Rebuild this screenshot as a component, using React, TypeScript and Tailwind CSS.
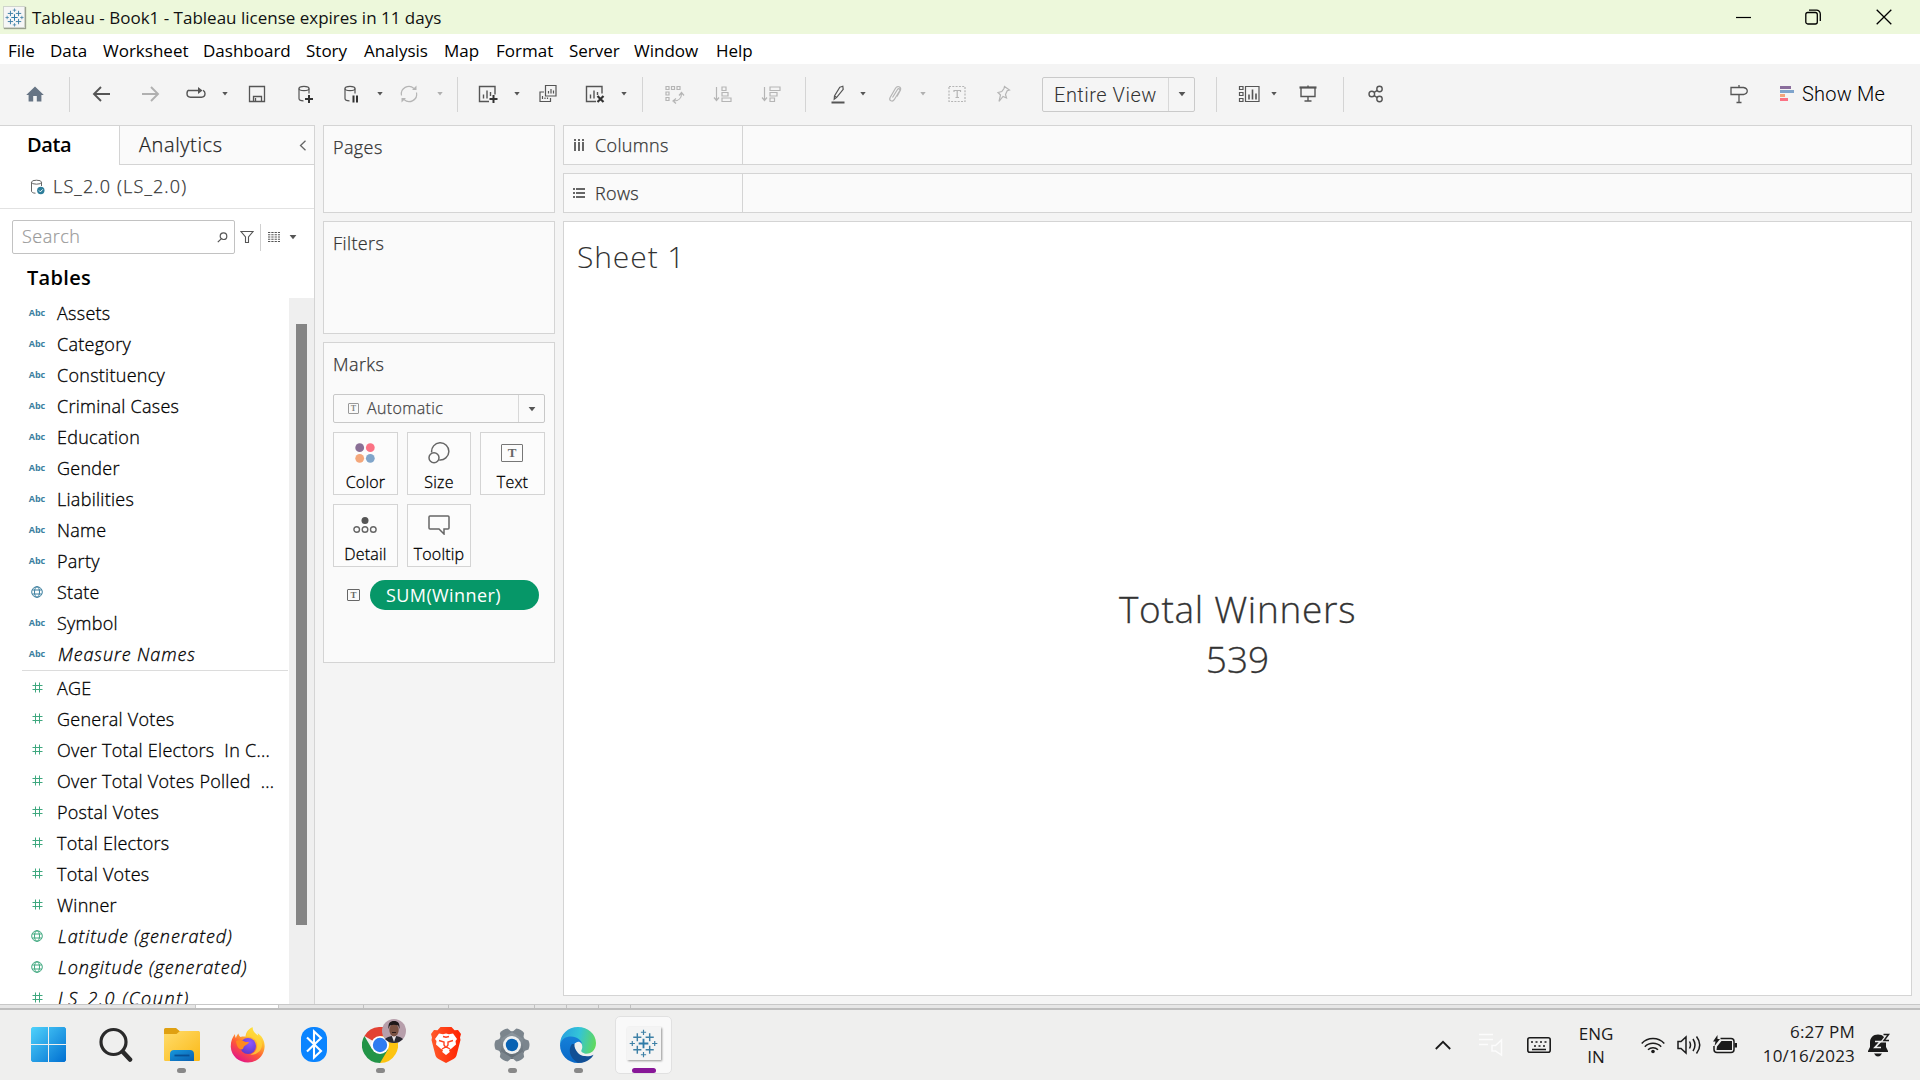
import type { ReactNode } from 'react';

type Cls = { className?: string };

const Svg = ({ className = '', children, size = 24 }: Cls & { children: ReactNode; size?: number }) => (
  <svg className={`shrink-0 ${className}`} width={size} height={size} viewBox="0 0 24 24" fill="none" stroke="currentColor" strokeWidth="1.2">
    {children}
  </svg>
);

const Caret = ({ className = '', big = false }: Cls & { big?: boolean }) => (
  <svg className={`shrink-0 ${className}`} width="8" height="6" viewBox="0 0 8 6">
    <path d={big ? 'M.6 1h6.800L4 5.200z' : 'M1.300 1h5.400L4 4.600z'} fill="currentColor" />
  </svg>
);

const Sep = ({ className = '' }: Cls) => <div className={`h-[35px] w-px shrink-0 bg-[#d4d4d4] ${className}`} />;

const Plus = ({ x, y, r, w }: { x: number; y: number; r: number; w: number }) => (
  <path d={`M${x - r} ${y}h${2 * r}M${x} ${y - r}v${2 * r}`} strokeWidth={w} />
);

/* Cluster of crosses that forms the Tableau mark */
const TableauMark = ({ size, thin = false }: { size: number; thin?: boolean }) => (
  <svg width={size} height={size} viewBox="0 0 30 30" fill="none" stroke="#2f7ba8">
    <Plus x={15} y={15} r={5} w={thin ? 1.6 : 1.9} />
    <g stroke="#3d80a6">
      <Plus x={8.6} y={8.6} r={4.2} w={1.5} />
      <Plus x={21.4} y={8.6} r={4.2} w={1.5} />
      <Plus x={8.6} y={21.4} r={4.2} w={1.5} />
      <Plus x={21.4} y={21.4} r={4.2} w={1.5} />
      <Plus x={15} y={3.4} r={2.7} w={1.2} />
      <Plus x={15} y={26.6} r={2.7} w={1.2} />
      <Plus x={3.4} y={15} r={2.7} w={1.2} />
      <Plus x={26.6} y={15} r={2.7} w={1.2} />
    </g>
  </svg>
);

const TextBox = ({ className = '' }: Cls) => (
  <span className={`flex shrink-0 items-center justify-center rounded-[1px] font-['Liberation_Serif',serif] leading-none font-bold ${className}`}>
    T
  </span>
);

const Cylinder = () => (
  <>
    <ellipse cx="11" cy="6.5" rx="5" ry="2.2" />
    <path d="M6 6.5v10c0 1.3 2 2.3 4.5 2.3M16 6.5v5" />
  </>
);

const menus: [string, string][] = [
  ['File', 'w-[42px]'], ['Data', 'w-[53px]'], ['Worksheet', 'w-[100px]'], ['Dashboard', 'w-[103px]'], ['Story', 'w-[58px]'],
  ['Analysis', 'w-[80px]'], ['Map', 'w-[52px]'], ['Format', 'w-[73px]'], ['Server', 'w-[65px]'], ['Window', 'w-[82px]'], ['Help', 'w-[60px]'],
];

function TitleBar() {
  return (
    <header className="flex h-[34px] items-center bg-[#edf8db] pl-[3px]">
      <div className="flex h-[22px] w-[22px] items-center justify-center border border-[#cfd4cc] bg-[#f6f6f6] shadow-[1px_1px_1px_rgba(0,0,0,.35)]">
        <TableauMark size={19} thin />
      </div>
      <span className="ml-[7px] grow pt-px text-[17px] text-[#111]">Tableau - Book1 - Tableau license expires in 11 days</span>
      <div className="flex items-center text-black">
        <svg width="15" height="16"><path d="M0 8.500h15" stroke="currentColor" strokeWidth="1.2" /></svg>
        <svg className="ml-[54px]" width="16" height="16" viewBox="0 0 16 16" fill="none" stroke="currentColor" strokeWidth="1.3">
          <rect x=".8" y="3.5" width="11.5" height="11.5" rx="2" />
          <path d="M4 1.2h7.5a3.8 3.8 0 0 1 3.8 3.8V12" />
        </svg>
        <svg className="mr-[28px] ml-[55px]" width="16" height="16" viewBox="0 0 16 16" fill="none" stroke="currentColor" strokeWidth="1.3">
          <path d="M.7.7l14.6 14.6M15.3.7L.7 15.3" />
        </svg>
      </div>
    </header>
  );
}

function Toolbar() {
  return (
    <div className="flex h-[61px] items-center bg-[#f4f4f4] pb-px text-[#555]">
      <svg className="ml-[23px] shrink-0" width="24" height="24" viewBox="0 0 24 24"><path d="M12 4.500L3.200 13h2.400v6.500h4.600V14h3.600v5.500h4.600V13h2.400z" fill="#667484" /></svg>
      <Sep className="ml-[22px]" />
      <Svg className="ml-5"><path d="M20 12H4.500M11 5l-7 7 7 7" strokeWidth="1.900" /></Svg>
      <Svg className="ml-6 text-[#b0b0b0]"><path d="M4 12h15.500M13 5l7 7-7 7" strokeWidth="1.900" /></Svg>
      <Svg className="ml-[22px]"><path d="M5 8.200C3.300 8.700 3 10 3 11.500 3 14 4.500 15.200 6.500 15.200h11c2 0 3.500-1.200 3.500-3.700 0-1.500-.5-2.600-2-3.200M5 8.500h10.500" strokeWidth="1.400" /><path d="M14 5l4.500 3.500L14 12z" fill="currentColor" stroke="none" /></Svg>
      <Caret className="ml-[13px]" />
      <Svg className="ml-4"><path d="M4.500 4.500h15v15h-15zM8.500 19.500v-5h8v5M10.500 19v-3" strokeWidth="1.300" /></Svg>
      <Svg className="ml-6"><Cylinder /><path d="M16 13v8M12 17h8" stroke="#333" strokeWidth="2" /></Svg>
      <Svg className="ml-[22px]"><Cylinder /><path d="M14.500 13.500v7M18 13.500v7" stroke="#333" strokeWidth="2" /></Svg>
      <Caret className="ml-[13px]" />
      <Svg className="ml-[13px] text-[#b5b5b5]"><path d="M4.500 13.500a7.500 7.500 0 0 1 12.500-7M19.500 10.500a7.500 7.500 0 0 1-12.500 7" /><path d="M15 8h4.500V3.500zM9 16H4.500v4.500z" fill="currentColor" stroke="none" /></Svg>
      <Caret className="ml-[15px] text-[#b0b0b0]" />
      <Sep className="ml-[13px]" />
      <Svg className="ml-[18px]"><path d="M13 19.500H3.500v-15h15.500v8M7.500 16.500v-4M11 16.500v-8M14.500 14v-4" strokeWidth="1.400" /><path d="M17.500 13v8M13.500 17h8" stroke="#333" strokeWidth="2" /></Svg>
      <Caret className="ml-[13px]" />
      <Svg className="ml-[15px]"><path d="M9.500 3.500h10.500v10.500H9.500zM8 10H4v9.500h10.500V16M12.500 11.500V9M15 11.500V7M17.500 11.500v-3M6.500 17v-3M9 17v-1.500M11.500 17v-1.500" /></Svg>
      <Svg className="ml-[23px]"><path d="M13 19.500H3.500v-15h15.500v7M7.500 16.500v-4M11 16.500v-8M14.500 13v-3" strokeWidth="1.400" /><path d="M14.500 14l6 6M20.500 14l-6 6" stroke="#333" strokeWidth="2.200" /></Svg>
      <Caret className="ml-[13px]" />
      <Sep className="ml-[14px]" />
      <Svg className="ml-[19px] text-[#b5b5b5]"><path d="M4 4.500h3v3H4zM9.500 4.500h3v3h-3zM15 4.500h3v3h-3zM4 10h3v3H4zM4 15.500h3v3H4zM19.500 11.500c0 4.500-3 7.500-7.500 7.500M17 13.500l2.500-3 2.500 3M14 16.500L11 19l3 2.500" /></Svg>
      <Svg className="ml-[25px] text-[#b5b5b5]"><path d="M5.500 5v13M3 15.500l2.500 3 2.500-3M11 5h4v3.500h-4zM11 10.500h6v3.500h-6zM11 16h9v3.500h-9z" /></Svg>
      <Svg className="ml-[25px] text-[#b5b5b5]"><path d="M4.500 5v13M2 15.500l2.500 3 2.500-3M10 5h10v3.500H10zM10 10.500h7v3.500h-7zM10 16h4.500v3.500H10z" /></Svg>
      <Sep className="ml-[21px]" />
      <Svg className="ml-5"><path d="M13.800 5.200l3-1 .4 3.200-6.500 8-2.500 1.800.3-3.200zM8.500 14l2.200 1.500" /><path d="M5.500 20.500h13" strokeWidth="2" /></Svg>
      <Caret className="ml-[9px]" />
      <Svg className="ml-4 text-[#b5b5b5]"><path d="M9.500 15.500l5-8c1-1.600 3-.5 2.200 1.200l-5.500 9c-1.700 2.600-5.500 1-4.200-2l5.500-9.500c1.700-2.800 6-1.800 5 1.800l-3.500 6.500" /></Svg>
      <Caret className="ml-3 text-[#b0b0b0]" />
      <Svg className="ml-[18px] text-[#b5b5b5]"><rect x="4" y="4.500" width="16" height="15" strokeDasharray="2 1.300" /><path d="M9 10V8.500h6.500V10M12.200 8.500v7M10.500 15.500H14" /></Svg>
      <Svg className="ml-[22px] text-[#b5b5b5]"><path d="M13.500 4.500l5 3.500-2.300.8-1.700 3.700 1 3.500-3.500-1.500-4 5 1.500-6.500-2.500-2.500 3.800-1 2.200-3z" /></Svg>
      <div className="ml-[27px] flex h-[35px] w-[153px] shrink-0 items-center rounded-[2px] border border-[#cacaca] bg-[#f5f5f5]">
        <span className="w-[125px] pt-px pl-[11px] font-[Roboto] text-[20px] font-light tracking-[.5px] text-[#333]">Entire View</span>
        <span className="flex h-full grow items-center justify-center border-l border-[#d8d8d8]"><Caret big /></span>
      </div>
      <Sep className="ml-[21px]" />
      <Svg className="ml-5"><path d="M8.500 4.500H22v15H8.500zM2.500 4.500h3.500v3H2.500zM2.500 10.500h3.500v3H2.500zM2.500 16.500h3.500v3H2.500z" /><path d="M12 17.500v-5M15.500 17.500V7.500M19 17.500v-6" strokeWidth="1.600" /></Svg>
      <Caret className="ml-[9px]" />
      <Svg className="ml-[18px]"><path d="M3.500 5.500h17" strokeWidth="2.200" /><path d="M5 6v8.500h14V6M12 3.500V5M12 14.500V19M8.500 19h7" strokeWidth="1.400" /></Svg>
      <Sep className="ml-[23px]" />
      <Svg className="ml-[21px]"><circle cx="6.800" cy="12" r="2.800" strokeWidth="1.400" /><circle cx="14.500" cy="7" r="2.700" strokeWidth="1.400" /><circle cx="14.500" cy="17" r="2.700" strokeWidth="1.400" /><path d="M9.200 10.300l3.100-2M9.200 13.700l3.100 2" strokeWidth="1.400" /></Svg>
      <Svg className="ml-[338px]"><path d="M4 5.500h12.500c5 1 5 6 0 7H4zM12 3v2.500M12 12.500v8M9.500 20.500h5" strokeWidth="1.300" /></Svg>
      <svg className="ml-[29px] shrink-0" width="15" height="16"><path d="M0 1.500h11" stroke="#8a6d9c" strokeWidth="3" /><path d="M0 5.500h14" stroke="#7fa4cc" strokeWidth="3" /><path d="M0 9.500h5" stroke="#f2a57c" strokeWidth="3" /><path d="M0 13.500h8" stroke="#fb7284" strokeWidth="3" /></svg>
      <span className="ml-[7px] font-[Roboto] text-[20px] font-light tracking-[.2px] whitespace-nowrap text-black">Show Me</span>
    </div>
  );
}

const Globe = () => (
  <svg width="12" height="12" viewBox="0 0 12 12" fill="none" stroke="currentColor" strokeWidth="1">
    <circle cx="6" cy="6" r="5.300" /><ellipse cx="6" cy="6" rx="2.500" ry="5.300" /><path d="M1.300 4h9.400M1.300 8h9.400" />
  </svg>
);
const Hash = () => (
  <svg width="11" height="11" viewBox="0 0 11 11" fill="none" stroke="currentColor"><path d="M3.500.5v10M7.500.5v10M.5 3.500h10M.5 7.500h10" /></svg>
);

type Field = { n: string; k: 'abc' | 'geo' | 'num'; i?: boolean };
const dimensions: Field[] = [
  ...['Assets', 'Category', 'Constituency', 'Criminal Cases', 'Education', 'Gender', 'Liabilities', 'Name', 'Party'].map((n) => ({ n, k: 'abc' as const })),
  { n: 'State', k: 'geo' }, { n: 'Symbol', k: 'abc' }, { n: 'Measure Names', k: 'abc', i: true },
];
const measures: Field[] = [
  ...['AGE', 'General Votes', 'Over Total Electors  In C...', 'Over Total Votes Polled  ...', 'Postal Votes', 'Total Electors', 'Total Votes', 'Winner'].map((n) => ({ n, k: 'num' as const })),
  { n: 'Latitude (generated)', k: 'geo', i: true }, { n: 'Longitude (generated)', k: 'geo', i: true }, { n: 'LS_2.0 (Count)', k: 'num', i: true },
];

const FieldRow = ({ f, green }: { f: Field; green?: boolean }) => (
  <div className="flex h-[31px] shrink-0 items-center pl-[28px]">
    <span className={`flex w-[18px] justify-center ${green ? 'text-[#3fa87f]' : 'text-[#3c7f9f]'}`}>
      {f.k === 'abc' ? <span className="text-[9px] leading-none font-bold">Abc</span> : f.k === 'geo' ? <Globe /> : <Hash />}
    </span>
    <span className={`text-[18px] leading-[26px] font-light whitespace-pre text-black [-webkit-text-stroke:0.3px_black] ${f.i ? (f.n.startsWith('LS') ? 'ml-3 tracking-[1.600px] italic' : 'ml-3 tracking-[.9px] italic') : 'ml-[11px] tracking-[.27px]'}`}>{f.n}</span>
  </div>
);

function DataPane() {
  return (
    <aside className="flex w-[315px] shrink-0 flex-col overflow-hidden border-r border-[#d4d4d4] bg-white">
      <div className="flex h-10 shrink-0 text-[20px]">
        <div className="w-[119px] border-t border-[#d4d4d4] pt-[4px] pl-[27px] font-semibold tracking-[-.4px] text-black">Data</div>
        <div className="flex grow items-center border border-r-0 border-[#d4d4d4] bg-[#fafafa] pr-[7px] pl-[19px] font-light">
          <span className="grow tracking-[.6px] text-[#222] [-webkit-text-stroke:0.25px_#222]">Analytics</span>
          <svg width="8" height="11" viewBox="0 0 8 11" fill="none" stroke="#666" strokeWidth="1.300"><path d="M6.500.7L1.500 5.500l5 4.800" /></svg>
        </div>
      </div>
      <div className="flex h-11 shrink-0 items-center border-b border-[#e2e2e2] pl-[30px]">
        <svg width="16" height="16" viewBox="0 0 16 16" fill="none" stroke="#666"><ellipse cx="6.500" cy="3.200" rx="5" ry="2" /><path d="M1.500 3.200v9c0 1 1.500 2 4 2M11.500 3.200V7" /><circle cx="10.800" cy="11.500" r="3.700" fill="#2d7d9a" stroke="none" /><path d="M9 11.500l1.400 1.400 2.300-2.500" stroke="#fff" /></svg>
        <span className="ml-[7px] text-[18px] font-light tracking-[1.150px] text-[#333] [-webkit-text-stroke:0.25px_#333]">LS_2.0 (LS_2.0)</span>
      </div>
      <div className="mt-[11px] flex h-[34px] shrink-0 items-center pl-3 text-[#555]">
        <div className="flex h-[34px] w-[223px] items-center rounded-[2px] border border-[#c2c2c2] pr-[6px] pl-[9px]">
          <span className="grow pb-px text-[18px] font-light tracking-[.5px] text-[#999] [-webkit-text-stroke:0.2px_#999]">Search</span>
          <svg width="11" height="11" viewBox="0 0 11 11" fill="none" stroke="currentColor" strokeWidth="1.200"><circle cx="6.500" cy="4.200" r="3.300" /><path d="M4.200 6.800L.8 10.200" /></svg>
        </div>
        <svg className="ml-[5px]" width="14" height="14" viewBox="0 0 14 14" fill="none" stroke="currentColor" strokeWidth="1.100"><path d="M1 1.500h12L8.500 7v5.500h-3V7z" /></svg>
        <div className="ml-[6px] h-[27px] w-px bg-[#d0d0d0]" />
        <svg className="ml-[7px]" width="12" height="10" viewBox="0 0 12 10" stroke="currentColor" strokeWidth="1.200" strokeDasharray="2.300 1"><path d="M0 .5h12M0 2.750h12M0 5h12M0 7.250h12M0 9.500h12" /></svg>
        <Caret big className="ml-[9px]" />
      </div>
      <div className="mt-[10px] h-[34px] shrink-0 pl-[27px] text-[20px] leading-[27px] font-semibold tracking-[.3px] text-black">Tables</div>
      <div className="flex min-h-0 grow">
        <div className="-mt-px flex w-[289px] flex-col overflow-hidden">
          {dimensions.map((f) => <FieldRow key={f.n} f={f} />)}
          <div className="my-px mr-px ml-[22px] h-px shrink-0 bg-[#dcdcdc]" />
          {measures.map((f) => <FieldRow key={f.n} f={f} green />)}
        </div>
        <div className="w-[25px] bg-[#efefef] pt-[26px] pl-[7px]"><div className="h-[601px] w-[11px] bg-[#858585]" /></div>
      </div>
    </aside>
  );
}

const Card = ({ title, className, children }: { title: string; className: string; children?: ReactNode }) => (
  <section className={`shrink-0 border border-[#d4d4d4] bg-[#fafafa] pl-[9px] ${className}`}>
    <h2 className="mb-px pt-[7px] text-[18px] leading-[28px] font-light tracking-[.4px] text-[#333] [-webkit-text-stroke:0.25px_#333]">{title}</h2>
    {children}
  </section>
);

const MarkButton = ({ label, children }: { label: string; children: ReactNode }) => (
  <div className="flex h-[63px] flex-col items-center border border-[#d4d4d4] bg-[#fcfcfc]">
    <div className="flex h-[39px] shrink-0 items-center text-[#666]">{children}</div>
    <span className="text-[16px] leading-[20px] font-light tracking-[.2px] text-black [-webkit-text-stroke:0.3px_black]">{label}</span>
  </div>
);

function Shelves() {
  return (
    <div className="ml-2 flex w-[232px] shrink-0 flex-col gap-2">
      <Card title="Pages" className="h-[88px]" />
      <Card title="Filters" className="h-[113px]" />
      <Card title="Marks" className="h-[321px]">
        <div className="mt-[16px] flex h-[29px] w-[212px] items-center rounded-[2px] border border-[#c8c8c8] text-[#555]">
          <TextBox className="ml-[14px] h-[11px] w-[11px] border border-[#999] text-[8px] text-[#888]" />
          <span className="ml-[8px] w-[151px] pb-px text-[16px] font-light tracking-[.35px] text-[#444] [-webkit-text-stroke:0.25px_#444]">Automatic</span>
          <span className="flex h-full grow items-center justify-center border-l border-[#d8d8d8]"><Caret big /></span>
        </div>
        <div className="mt-[9px] grid w-[212px] grid-cols-[65px_64px_65px] gap-[9px]">
          <MarkButton label="Color">
            <svg className="mr-[2px]" width="20" height="20"><circle cx="4.700" cy="4.700" r="4.400" fill="#8a7096" /><circle cx="15.300" cy="4.700" r="4.400" fill="#fb7284" /><circle cx="4.700" cy="15.300" r="4.400" fill="#f4a77b" /><circle cx="15.300" cy="15.300" r="4.400" fill="#80a5ca" /></svg>
          </MarkButton>
          <MarkButton label="Size">
            <svg width="22" height="22" fill="none" stroke="currentColor" strokeWidth="1.500"><path d="M3.700 10.500a8.600 8.600 0 1 1 7.500 7.400" /><circle cx="6" cy="15.800" r="5" /></svg>
          </MarkButton>
          <MarkButton label="Text"><TextBox className="mr-px h-[18px] w-[22px] border-[1.500px] border-[#777] text-[13px]" /></MarkButton>
          <MarkButton label="Detail">
            <svg className="mr-[2px]" width="24" height="18" fill="none" stroke="currentColor" strokeWidth="1.400"><circle cx="12" cy="4.500" r="3.500" fill="#555" stroke="none" /><circle cx="3.700" cy="13.500" r="2.800" /><circle cx="12" cy="13.500" r="2.800" /><circle cx="20.300" cy="13.500" r="2.800" /></svg>
          </MarkButton>
          <MarkButton label="Tooltip">
            <svg width="22" height="20" fill="none" stroke="currentColor" strokeWidth="1.500"><path d="M2 1h18a1 1 0 0 1 1 1v11a1 1 0 0 1-1 1h-4v5l-5-5H2a1 1 0 0 1-1-1V2a1 1 0 0 1 1-1z" /></svg>
          </MarkButton>
        </div>
        <div className="mt-[13px] flex h-[30px] items-center pl-[14px] text-[#666]">
          <TextBox className="h-[12px] w-[13px] border border-[#666] text-[9px]" />
          <span className="ml-[10px] flex h-[30px] w-[169px] items-center rounded-full bg-[#069768] pl-[16px] text-[18px] tracking-[.4px] text-white">SUM(Winner)</span>
        </div>
      </Card>
    </div>
  );
}

const Shelf = ({ label, children }: { label: string; children: ReactNode }) => (
  <div className="flex h-10 shrink-0 border border-[#d4d4d4] bg-[#fafafa]">
    <div className="flex w-[179px] items-center border-r border-[#d4d4d4] pl-[9px]">
      {children}
      <span className="ml-[10px] text-[18px] font-light tracking-[.35px] text-[#333] [-webkit-text-stroke:0.25px_#333]">{label}</span>
    </div>
  </div>
);

function Sheet() {
  return (
    <main className="mr-2 ml-2 flex grow flex-col gap-2">
      <Shelf label="Columns"><svg width="12" height="12" fill="#666"><path d="M1 0h2v2H1zM5 0h2v2H5zM9 0h2v2H9zM1 3h2v9H1zM5 3h2v9H5zM9 3h2v9H9z" /></svg></Shelf>
      <Shelf label="Rows"><svg width="12" height="12" fill="#666"><path d="M0 1h2v2H0zM0 5h2v2H0zM0 9h2v2H0zM3 1h9v2H3zM3 5h9v2H3zM3 9h9v2H3z" /></svg></Shelf>
      <section className="flex h-[775px] flex-col border border-[#d4d4d4] bg-white font-light text-[#333]">
        <h1 className="pt-[14px] pl-[13px] text-[30px] leading-[41px] tracking-[.9px]">Sheet 1</h1>
        <div className="pt-[307px] text-center text-[37px] leading-[50px] tracking-[.7px] [-webkit-text-stroke:0.3px_#333]">
          <p>Total Winners</p>
          <p className="tracking-normal">539</p>
        </div>
      </section>
    </main>
  );
}

const TaskItem = ({ children, mark, className = '' }: Cls & { children: ReactNode; mark?: boolean }) => (
  <div className={`flex h-[60px] w-[66px] shrink-0 flex-col items-center pt-[9px] ${className}`}>
    <div className="flex h-[41px] items-center">{children}</div>
    {mark && <span className="mt-[3px] h-[5px] w-[9px] rounded-full bg-[#888]" />}
  </div>
);

const toothAngles = [0, 60, 120, 180, 240, 300];

function Taskbar() {
  return (
    <footer className="flex h-[70px] items-center bg-[#efefee] pl-[15px]">
      <TaskItem>
        <svg width="35" height="35"><defs><linearGradient id="win" x1="0" y1="0" x2="35" y2="35" gradientUnits="userSpaceOnUse"><stop stopColor="#4fd2fb" /><stop offset="1" stopColor="#006fd1" /></linearGradient></defs><path d="M1.500 0H17v17H0V1.500zM18 0h15.500L35 1.500V17H18zM0 18h17v17H1.500L0 33.500zM18 18h17v15.500L33.500 35H18z" fill="url(#win)" /></svg>
      </TaskItem>
      <TaskItem className="pl-[4px]">
        <svg width="34" height="36" fill="none" stroke="#2a2a2a"><circle cx="14.500" cy="15" r="12.500" strokeWidth="3.200" /><path d="M24 25l7 7.500" strokeWidth="4.600" strokeLinecap="round" /></svg>
      </TaskItem>
      <TaskItem mark className="pl-[3px]">
        <svg width="36" height="33"><defs><linearGradient id="fold" x1="0" y1="0" x2="1" y2="1"><stop stopColor="#ffdc6b" /><stop offset="1" stopColor="#fbb917" /></linearGradient><linearGradient id="dip" x1="0" y1="0" x2="1" y2="1"><stop stopColor="#1798dd" /><stop offset="1" stopColor="#0a5fb0" /></linearGradient></defs><path d="M1.500 0H12l3.500 3H35v12H0V1.500A1.500 1.500 0 0 1 1.500 0z" fill="#dfa011" /><path d="M0 6h12.500L16 3h18.500A1.500 1.500 0 0 1 36 4.500v27a1.500 1.500 0 0 1-1.500 1.500h-33A1.500 1.500 0 0 1 0 31.500z" fill="url(#fold)" /><path d="M6 33v-7c0-2.500 1.500-4 4-4h16c2.500 0 4 1.500 4 4v7z" fill="url(#dip)" /><path d="M10.500 27.500h15" stroke="#084f93" strokeWidth="1.800" /></svg>
      </TaskItem>
      <TaskItem className="pl-[4px]">
        <svg width="36" height="36" viewBox="0 0 36 36"><defs><linearGradient id="fox" x1="28" y1="3" x2="9" y2="34" gradientUnits="userSpaceOnUse"><stop stopColor="#fff44f" /><stop offset=".3" stopColor="#ffb52c" /><stop offset=".6" stopColor="#ff5a36" /><stop offset="1" stopColor="#e31587" /></linearGradient><radialGradient id="orb" cx=".6" cy=".3" r=".8"><stop stopColor="#9059ff" /><stop offset="1" stopColor="#5b35c5" /></radialGradient></defs><path d="M5 7c0 2 .3 3 1 4 .4-2 1.500-3.500 2.500-4.500.2 1.800.8 2.700 2 3.500 2-.6 4-.5 5-.3C16 5.500 18 2 22.500.2 22.500 4 25 6 28 8.500c0-1-.2-2-.5-2.500C32 9 35 14 34.600 20 34 29 27 35.500 18 35.500S1.200 29 .8 20C.6 14.500 2.500 10 5 7z" fill="url(#fox)" /><circle cx="18" cy="19" r="8" fill="url(#orb)" /><path d="M6 14c3-1.500 6-1.300 8 .2 2 1.300 3.500.8 5 .8-.5 2-2.500 2.500-4.500 4-1.500 1.200-.5 3-3 3.500-3 0-5-4-5.500-8.500z" fill="#ff8a1f" /><path d="M16 10c5-1.500 10 2 11 6 1 5-1.500 10-7 11.500 7 1 12-4 12-10C32 13 29 10 26 7.500 23.500 5.500 22.500 3 22.500.2 19 2 16.500 5 16 10z" fill="#ffd738" opacity=".75" /></svg>
      </TaskItem>
      <TaskItem className="pl-[4px]">
        <svg width="26" height="35"><rect width="26" height="35" rx="12" fill="#0a84ff" /><path d="M6 10.500L20 24l-7 6.500V4.500l7 6.500L6 24.500" fill="none" stroke="#fff" strokeWidth="2.100" /></svg>
      </TaskItem>
      <TaskItem mark className="pl-[4px]">
        <div className="relative">
          <svg width="36" height="36" viewBox="0 0 36 36"><path d="M18 18L2.400 9A18 18 0 0 1 33.600 9z" fill="#e34133" /><path d="M18 9h15.600A18 18 0 0 1 18 36l-2-4 10-14z" fill="#fdc411" /><path d="M2.400 9A18 18 0 0 0 18 36l8-13.500-16-.5z" fill="#229447" /><path d="M18 9h15.600A18 18 0 0 0 18 0z" fill="#e34133" /><circle cx="18" cy="18" r="9" fill="#fff" /><circle cx="18" cy="18" r="7.200" fill="#2f7cf0" /></svg>
          <svg className="absolute -top-[8px] left-[20px]" width="24" height="24" viewBox="0 0 24 24"><defs><clipPath id="face"><circle cx="12" cy="12" r="12" /></clipPath></defs><g clipPath="url(#face)"><path d="M0 0h24v24H0z" fill="#b79fab" /><path d="M2 24c0-5 4-7 10-7s10 2 10 7z" fill="#2b2a32" /><path d="M9.500 16h5L12 23z" fill="#e6e1e4" /><ellipse cx="12" cy="11" rx="4.700" ry="6.500" fill="#795142" /><path d="M6.500 10C6 4 8 2 12 2s6 2 5.500 8l-1.300-3.500c-3-1-5.500-1-8.400 0z" fill="#1d1718" /><path d="M10 13.500h4" stroke="#2c1b19" /></g></svg>
        </div>
      </TaskItem>
      <TaskItem className="pl-[3px]">
        <svg width="30" height="36" viewBox="0 0 30 36"><defs><linearGradient id="brave"><stop stopColor="#ff5a2a" /><stop offset="1" stopColor="#ff2200" /></linearGradient></defs><path d="M9.500 0h11l3 3.300 3.500-.3 3 4-1 3.500.5 2.500-4 15.500c-.5 1.500-1.500 2.500-3 3.500L15 36l-7.500-4c-1.500-1-2.500-2-3-3.500L.5 13 1 10.500 0 7l3-4 3.500.3z" fill="url(#brave)" /><path d="M15 6.500l3 .8 4-.8 4 5.500-1.500 2 .5 3.500-4.500 4-2.500 1.500.8 2L15 28l-3.800-3 .8-2-2.500-1.500-4.500-4 .5-3.500L4 12l4-5.500 4 .8z" fill="#fff" /><path d="M8 13.500l5 1.500v3l1.500 2-3.500 2M22 13.500L17 15v3l-1.500 2 3.500 2M12 9.500l3 .8 3-.8" fill="none" stroke="#ff4120" strokeWidth="1.400" /></svg>
      </TaskItem>
      <TaskItem mark className="pl-[4px]">
        <svg width="36" height="36" viewBox="-18 -18 36 36"><defs><linearGradient id="gear" x1="0" y1="0" x2="0" y2="1"><stop stopColor="#929ca4" /><stop offset="1" stopColor="#5f6971" /></linearGradient></defs><circle r="14" fill="url(#gear)" />{toothAngles.map((a) => <path key={a} transform={`rotate(${a})`} d="M11-6.500L16.500-4.500Q18.500 0 16.500 4.500L11 6.500z" fill="#7b858d" />)}<circle r="9" fill="#eef0f1" /><circle r="6.200" fill="#0862b3" /></svg>
      </TaskItem>
      <TaskItem mark className="pl-[4px]">
        <svg width="36" height="36" viewBox="0 0 36 36"><defs><linearGradient id="e1" x1="0" y1="8" x2="36" y2="16" gradientUnits="userSpaceOnUse"><stop stopColor="#279fe0" /><stop offset=".5" stopColor="#33c4d8" /><stop offset="1" stopColor="#62d95a" /></linearGradient><linearGradient id="e2" x1="0" y1="0" x2="0" y2="1"><stop stopColor="#1680d8" /><stop offset="1" stopColor="#0868c7" /></linearGradient></defs><path d="M0 18C0 7 8 0 18 0s18 7 18 16c0 7-5 11-10 11-4 0-5.500-2-4.500-4 1.500-2 1.500-8-4.500-9.500C9 12 2 15 0 18z" fill="url(#e1)" /><path d="M0 18c1-6 6-8.500 11-8.500 6 0 11 4 11 8-6-5-11 1-9 7 2 5 8 8 14 7.500C24 35 21 36 18 36 8 36 0 28 0 18z" fill="url(#e2)" /><path d="M12 17c-4 5-3 14 6 18.800 7 .5 13-3 15.500-8-5 2.500-11 2-14-1.500-3-3.500-2-7-1-9-3-.5-5-.5-6.500-.3z" fill="#114f95" /><path d="M14.500 17c1.500-2.500 5-3.500 7-.5 1 2-1 4-1 6.500 1.500 4.500 8 4 12.500 3.500-5 3.500-12 3-15-.5-2.500-3-4-6-3.500-9z" fill="#efefee" /></svg>
      </TaskItem>
      <div className="ml-[6px] flex h-[58px] w-[57px] shrink-0 flex-col items-center rounded-[5px] border border-[#e1e1e1] bg-[#f9f9f9] pt-[10px]">
        <div className="flex h-[34px] w-[34px] items-center justify-center bg-[#f4f4f4] shadow-[1px_1px_2px_rgba(0,0,0,.4)]"><TableauMark size={29} /></div>
        <span className="mt-[8px] h-[5px] w-[24px] shrink-0 rounded-full bg-[#881798]" />
      </div>
      <div className="grow" />
      <div className="flex h-full shrink-0 items-center text-[#1b1b1b]">
        <svg width="16" height="10" fill="none" stroke="currentColor" strokeWidth="1.800"><path d="M.8 9L8 1.800 15.200 9" /></svg>
        <svg className="ml-[28px]" width="24" height="24" fill="none" stroke="#fcfcfc" strokeWidth="1.500"><path d="M0 1.500h14M0 6.500h14M0 11.500h9M13 12.500h3.500L22.500 7v15L16.500 18H13z" /></svg>
        <svg className="ml-[24px]" width="24" height="16" fill="none" stroke="currentColor" strokeWidth="1.600"><rect x=".8" y=".8" width="22.400" height="14.400" rx="2" /><path d="M4 5h2M8.500 5h2M13 5h2M17.500 5h2M7 9h2M11.500 9h2M16 9h2M5 12.500h14" strokeWidth="1.500" /></svg>
        <div className="ml-[25px] w-[40px] pb-px text-center text-[17px] leading-[23px]">ENG<br />IN</div>
        <svg className="ml-[25px]" width="24" height="18" fill="none" stroke="currentColor" strokeWidth="1.500"><path d="M.7 7.500a15.500 15.500 0 0 1 22.600 0M3.800 10.800a11.500 11.500 0 0 1 16.400 0M7 13.800a7.200 7.200 0 0 1 10 0" /><circle cx="12" cy="15.500" r="1.800" fill="currentColor" stroke="none" /></svg>
        <svg className="ml-[12px]" width="25" height="20" fill="none" stroke="currentColor" strokeWidth="1.500"><path d="M1 6.500h3L9 2v16L4 13.500H1zM12.500 6.500q2 3.500 0 7M16 4q4 6 0 12M19.500 1.500q6.500 8.500 0 17" /></svg>
        <svg className="ml-[11px]" width="24" height="20" fill="none" stroke="currentColor" strokeWidth="1.500"><path d="M7.500 3.500H18q3 0 3 3v8q0 3-3 3H4q-3 0-3-3v-3.500" /><path d="M8.500 6H19v9H3.500l.5-3.500zM21.500 8H24v4.500h-2.500zM4.500 0L0 6.500h2.500L1.500 11 7 4H4.500z" fill="currentColor" stroke="none" /></svg>
        <div className="ml-[20px] w-[98px] pb-[2px] text-right text-[17px] leading-[24px] tracking-[.2px]">6:27 PM<br />10/16/2023</div>
        <svg className="mr-[30px] ml-[13px]" width="22" height="24" fill="none">
          <path d="M10 1.500c-5 0-8 3.500-8 8V14L0 18v1h20v-1l-2-4V9.500c0-4.500-3-8-8-8zM6 20.500h8q-1.500 3-4 3t-4-3z" fill="currentColor" />
          <path d="M15.500 1.500h5l-4.500 6h5" stroke="#efefee" strokeWidth="4" />
          <path d="M7 8.500h5.500l-5.500 6h6" stroke="#efefee" strokeWidth="1.700" />
          <path d="M15.500 1.500h5l-4.500 6h5" stroke="currentColor" strokeWidth="1.500" />
        </svg>
      </div>
    </footer>
  );
}

export default function App() {
  return (
    <div className="flex h-[1080px] w-[1920px] flex-col overflow-hidden bg-[#f4f4f4] font-['Open_Sans',sans-serif]">
      <TitleBar />
      <nav className="flex h-[30px] items-center bg-white pt-[3px] pl-[8px] text-[17px] text-black">
        {menus.map(([m, w]) => <span key={m} className={`shrink-0 leading-[24px] whitespace-nowrap ${w}`}>{m}</span>)}
      </nav>
      <Toolbar />
      <div className="flex h-[879px] shrink-0">
        <DataPane />
        <Shelves />
        <Sheet />
      </div>
      <div className="flex h-[6px] shrink-0 border-t border-b-2 border-t-[#c8c8c8] border-b-[#bebebe] bg-[#e6e6e6]">
        <div className="w-[195px]" />
        <div className="w-[84px] border-x border-[#c8c8c8] bg-white" />
        <div className="w-[85px] border-r border-[#c0c0c0]" />
        <div className="w-[85px] border-r border-[#c0c0c0]" />
        <div className="w-[86px] border-r border-[#c0c0c0]" />
        <div className="w-[32px] border-r border-[#c0c0c0]" />
        <div className="w-[32px] border-r border-[#c0c0c0]" />
        <div className="w-[32px] border-r border-[#c0c0c0]" />
      </div>
      <Taskbar />
    </div>
  );
}
